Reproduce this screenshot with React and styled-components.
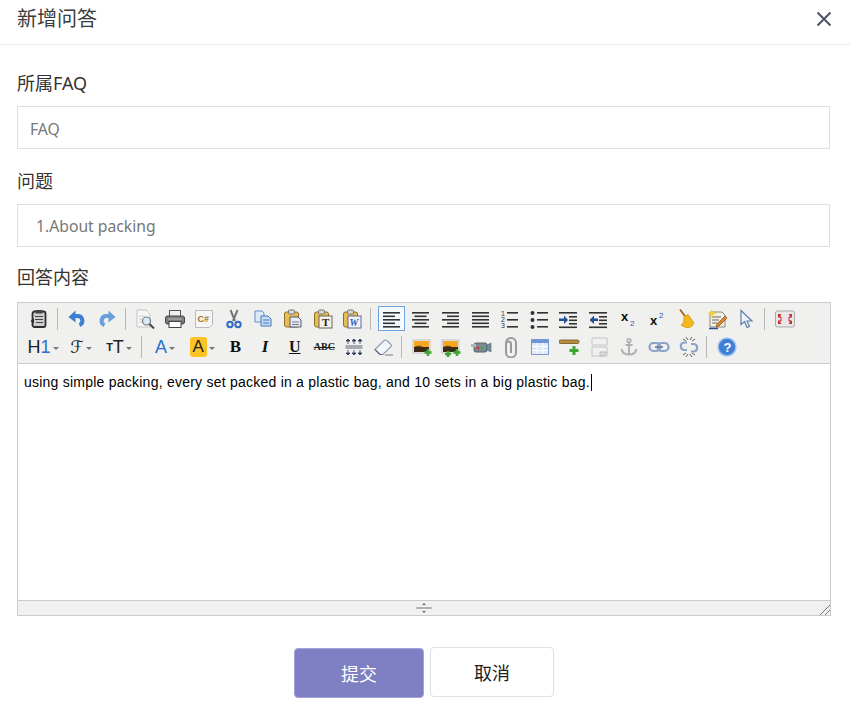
import React from 'react'
import styled, { createGlobalStyle } from 'styled-components'

const cjk = `"Noto Sans", "Noto Sans CJK SC", sans-serif`

const GlobalStyle = createGlobalStyle`
  html, body {
    margin: 0;
    background: #fff;
    font-family: ${cjk};
    color: #333;
  }
`

const Dialog = styled.div`
  width: 850px;
  height: 720px;
  overflow: hidden;
  background: #fff;
`

const Header = styled.header`
  height: 38px;
  display: flex;
  align-items: center;
  justify-content: space-between;
  padding: 0 17px 6px 17px;
  border-bottom: 1px solid #e9ebef;
`

const Title = styled.h1`
  margin: 0;
  font-size: 20px;
  line-height: 28px;
  font-weight: 400;
  color: #3b3b3b;
`

const CloseButton = styled.button`
  width: 18px;
  height: 18px;
  padding: 0;
  border: 0;
  background: none;
  display: flex;
`

const Form = styled.form`
  padding: 26px 19px 0 17px;
`

const Label = styled.label`
  display: block;
  font-size: 18px;
  line-height: 24px;
  color: #333;
  margin-bottom: ${p => p.$gap || 11}px;
`

const Input = styled.input`
  display: block;
  width: 813px;
  height: 43px;
  box-sizing: border-box;
  border: 1px solid #dcdfe6;
  padding: ${p => p.$inset};
  margin-bottom: ${p => p.$after}px;
  font: 15.700px ${cjk};
  color: #777;
  outline: none;
  &::placeholder { color: #777; opacity: 1; }
`

const Editor = styled.div`
  width: 814px;
  height: 314px;
  box-sizing: border-box;
  border: 1px solid #ccc;
  display: flex;
  flex-direction: column;
`

const Toolbar = styled.div`
  height: 61px;
  padding: 2px 0 0 6px;
  box-sizing: border-box;
  background: #f0f0ee;
  border-bottom: 1px solid #ccc;
`

const ToolRow = styled.div`
  height: 28px;
  display: flex;
  align-items: center;
`

const ToolButton = styled.div`
  flex: none;
  width: ${p => p.$w || 29.65}px;
  height: 28px;
  display: flex;
  align-items: center;
  justify-content: center;
  position: relative;
  color: #222;
  ${p => p.$active && `
    &::before {
      content: '';
      position: absolute;
      left: 2px;
      right: 0;
      top: 1px;
      bottom: 2px;
      border: 1px solid #6aa5e0;
      background: #f7fafd;
    }
  `}
  svg { position: relative; display: block; }
`

const Separator = styled.span`
  flex: none;
  width: ${p => p.$w || 8.6}px;
  height: 22px;
  position: relative;
  &::after {
    content: '';
    position: absolute;
    left: 3px;
    top: 0;
    bottom: 0;
    width: 1px;
    background: #b8b8b6;
  }
`

const DropArrow = styled.i`
  width: 0;
  height: 0;
  margin-left: 2px;
  margin-top: 2px;
  border: 3px solid transparent;
  border-top: 3px solid #777;
  border-bottom: 0;
`

const Glyph = styled.span`
  font-family: ${p => (p.$script ? '"DejaVu Sans", serif' : p.$serif ? '"Liberation Serif", serif' : '"Liberation Sans", sans-serif')};
  font-size: ${p => p.$size || 17}px;
  font-weight: ${p => (p.$bold ? 700 : 400)};
  font-style: ${p => (p.$italic ? 'italic' : 'normal')};
  line-height: 18px;
  color: ${p => p.$color || '#222'};
  text-decoration: ${p => p.$deco || 'none'};
`

const Marker = styled.span`
  width: 17px;
  height: 20px;
  border-radius: 3px;
  background: #fdc223;
  display: flex;
  align-items: center;
  justify-content: center;
`

const Body = styled.div`
  flex: 1;
  padding: 8px 6px;
  background: #fff;
  font: 14px/20px "Liberation Sans", Arial, sans-serif;
  letter-spacing: 0.235px;
  color: #000;
`

const Caret = styled.span`
  display: inline-block;
  width: 1px;
  height: 17px;
  margin-left: 1px;
  vertical-align: -4px;
  background: #000;
`

const StatusBar = styled.div`
  height: 14px;
  background: #f0f0ee;
  border-top: 1px solid #ccc;
  display: flex;
  align-items: center;
  justify-content: center;
  position: relative;
`

const ResizeCorner = styled.svg`
  position: absolute;
  right: 0;
  bottom: 0;
`

const Actions = styled.div`
  display: flex;
  justify-content: center;
  align-items: flex-start;
  gap: 6px;
  margin-top: 31px;
`

const Button = styled.button`
  width: ${p => (p.$primary ? 130 : 124)}px;
  height: 50px;
  box-sizing: border-box;
  margin-top: ${p => (p.$primary ? 1 : 0)}px;
  border: 1px solid ${p => (p.$primary ? '#a3a3dc' : '#dcdfe6')};
  border-radius: 4px;
  background: ${p => (p.$primary ? '#7f7fc4' : '#fff')};
  color: ${p => (p.$primary ? '#fff' : '#222')};
  font: 18px ${cjk};
`

const Ico = ({ children, w = 22, h = 22 }) => (
  <svg width={w} height={h} viewBox={`0 0 ${w} ${h}`} fill="none">{children}</svg>
)

const lines = (rows, color = '#333', h = 1.6) =>
  rows.map(([x, y, w], i) => <rect key={i} x={x} y={y} width={w} height={h} fill={color} />)

const Clipboard = ({ children }) => (
  <Ico>
    <rect x="2.500" y="4" width="14" height="15" rx="2" fill="#e9bd52" stroke="#8c6d2a" />
    <rect x="6.500" y="2" width="6" height="4" rx="1" fill="#d9d9d9" stroke="#777" />
    {children}
  </Ico>
)

const Pointer = ({ flip }) => (
  <g transform={flip ? 'translate(22 0) scale(-1 1)' : undefined}>
    <path d="M8 8h3.500a4.800 4.800 0 0 1 2 9.200" stroke={flip ? '#6a9fdc' : '#3f7fcf'} strokeWidth="4" />
    <path d="M2.500 9 9.500 2.500v12z" fill={flip ? '#6a9fdc' : '#3f7fcf'} />
  </g>
)

const Picture = ({ plus = 1 }) => (
  <Ico>
    <rect x="2" y="4" width="17" height="13" fill="#fff" stroke="#bbb" />
    <rect x="3" y="5" width="15" height="6" fill="#f5a623" />
    <path d="M3 11h15v5H3z" fill="#3a2a16" />
    <path d="M3 11q5-3 9 0z" fill="#7a4a12" />
    <path d="M17 13v7M13.500 16.500h7" stroke="#3fa535" strokeWidth="2.600" />
    {plus > 1 && <path d="M8 15v6M5 18h6" stroke="#3fa535" strokeWidth="2.600" />}
  </Ico>
)

const icons = {
  source: (
    <Ico>
      <rect x="4.500" y="3.500" width="13" height="15.500" rx="2" fill="#cfcfcf" stroke="#2e2e2e" strokeWidth="1.800" />
      <rect x="7.500" y="2" width="7" height="3.500" fill="#444" />
      <path d="M7 8.500h8M7 11.500h8M8 14.500h7" stroke="#444" />
      <path d="M2.500 13l3.500-2.500v5z" fill="#2e2e2e" />
    </Ico>
  ),
  undo: <Ico><Pointer /></Ico>,
  redo: <Ico><Pointer flip /></Ico>,
  preview: (
    <Ico>
      <path d="M3 2h9l4 4v13H3z" fill="#f7f7f7" stroke="#c4c4c4" />
      <path d="M5 8h6M5 11h3M5 14h3" stroke="#ccc" />
      <circle cx="12.500" cy="13" r="4" fill="#dcebf6" stroke="#778" strokeWidth="1.200" />
      <path d="M15.500 16l4.500 4.500" stroke="#444" strokeWidth="2" />
    </Ico>
  ),
  print: (
    <Ico>
      <rect x="5.500" y="2.500" width="11" height="6" fill="#eee" stroke="#555" />
      <rect x="1.500" y="8" width="19" height="8" rx="2" fill="#7d7d7d" stroke="#444" />
      <rect x="5" y="13.500" width="12" height="6" fill="#fff" stroke="#444" />
      <path d="M4 11h14" stroke="#bbb" />
    </Ico>
  ),
  csharp: (
    <Ico>
      <path d="M2.500 2.500h17v14l-3 3h-14z" fill="#f6f6f4" stroke="#bbb" />
      <text x="4.500" y="14" fontFamily="Liberation Sans" fontWeight="700" fontSize="9" fill="#a5722f">C#</text>
    </Ico>
  ),
  cut: (
    <Ico>
      <path d="M7.500 2l4.500 11M14.500 2 10 13" stroke="#777" strokeWidth="2" />
      <circle cx="7" cy="16.500" r="2.700" stroke="#2f6cc4" strokeWidth="2" />
      <circle cx="15" cy="16.500" r="2.700" stroke="#2f6cc4" strokeWidth="2" />
    </Ico>
  ),
  copy: (
    <Ico>
      <path d="M3 3h7l2 2v9H3z" fill="#dfeaf8" stroke="#5f8fcf" />
      <path d="M9 8h7l3 3v7H9z" fill="#c7dcf5" stroke="#3f74bd" />
      <path d="M11 12h6M11 15h6" stroke="#3f74bd" />
    </Ico>
  ),
  paste: <Clipboard><path d="M8 9h8l3 3v7H8z" fill="#e6ecf5" stroke="#556" /><path d="M10 14h7M10 16.500h7" stroke="#778" /></Clipboard>,
  pasteText: <Clipboard><rect x="7" y="8" width="13" height="12" fill="#f5f2e8" stroke="#666" /><text x="10" y="18" fontFamily="Liberation Serif" fontWeight="700" fontSize="11" fill="#222">T</text></Clipboard>,
  pasteWord: <Clipboard><rect x="7" y="8" width="13" height="12" fill="#f2f5fb" stroke="#668" /><text x="8.500" y="18" fontFamily="Liberation Serif" fontWeight="700" fontStyle="italic" fontSize="10" fill="#2a5db8">W</text></Clipboard>,
  left: <Ico>{lines([[3, 4, 17], [3, 7.500, 12], [3, 11, 17], [3, 14.500, 12], [3, 18, 17]])}</Ico>,
  center: <Ico>{lines([[3, 4, 17], [5.500, 7.500, 12], [3, 11, 17], [5.500, 14.500, 12], [3, 18, 17]])}</Ico>,
  right: <Ico>{lines([[3, 4, 17], [8, 7.500, 12], [3, 11, 17], [8, 14.500, 12], [3, 18, 17]])}</Ico>,
  justify: <Ico>{lines([[3, 4, 17], [3, 7.500, 17], [3, 11, 17], [3, 14.500, 17], [3, 18, 17]])}</Ico>,
  ol: (
    <Ico>
      {lines([[9, 4, 11], [9, 11, 11], [9, 18, 11]])}
      <text x="3" y="8" fontFamily="Liberation Sans" fontSize="7" fill="#333">1</text>
      <text x="3" y="14" fontFamily="Liberation Sans" fontSize="7" fill="#333">2</text>
      <text x="3" y="20" fontFamily="Liberation Sans" fontSize="7" fill="#333">3</text>
    </Ico>
  ),
  ul: (
    <Ico>
      {lines([[9, 4, 11], [9, 11, 11], [9, 18, 11]])}
      <circle cx="4.500" cy="5" r="2" fill="#333" /><circle cx="4.500" cy="12" r="2" fill="#333" /><circle cx="4.500" cy="19" r="2" fill="#333" />
    </Ico>
  ),
  indent: (
    <Ico>
      {lines([[2, 4, 18], [12, 8, 8], [12, 11.500, 8], [12, 15, 8], [2, 18.500, 18]])}
      <path d="M2 10.500h5V7.500l4 4.500-4 4v-3H2z" fill="#1f4f95" />
    </Ico>
  ),
  outdent: (
    <Ico>
      {lines([[2, 4, 18], [12, 8, 8], [12, 11.500, 8], [12, 15, 8], [2, 18.500, 18]])}
      <path d="M11 10.500H7V7.500L2.500 12 7 16v-3h4z" fill="#1f4f95" />
    </Ico>
  ),
  sub: (
    <Ico>
      <text x="4" y="13" fontFamily="Liberation Sans" fontWeight="700" fontSize="13" fill="#111">x</text>
      <text x="13" y="18" fontFamily="Liberation Sans" fontSize="8" fill="#2a5db8">2</text>
    </Ico>
  ),
  sup: (
    <Ico>
      <text x="4" y="17" fontFamily="Liberation Sans" fontWeight="700" fontSize="13" fill="#111">x</text>
      <text x="13" y="10" fontFamily="Liberation Sans" fontSize="8" fill="#2a5db8">2</text>
    </Ico>
  ),
  broom: (
    <Ico>
      <path d="M4 1.500l6 8" stroke="#a8651a" strokeWidth="1.800" />
      <path d="M8 9l4-2.500 6 8.500q-1 3-4.500 4.500T5 17q3.500-1.500 3-8z" fill="#f3b81f" stroke="#e0a312" />
    </Ico>
  ),
  edit: (
    <Ico>
      <path d="M4 4h12l3 3v12H4z" fill="#f4f0e2" stroke="#888" />
      <path d="M6 9h9M6 12h7M6 15h5" stroke="#666" />
      <path d="M6 1l1.200 3.300L10.500 5.500 7.200 6.700 6 10 4.800 6.700 1.500 5.500l3.300-1.200z" fill="#f8d52a" />
      <path d="M10 19l1-3 8-8 2 2-8 8z" fill="#d98a2c" stroke="#8a5a1c" strokeWidth=".8" />
      <path d="M3 20.500h9" stroke="#2a4f95" strokeWidth="1.500" />
    </Ico>
  ),
  cursor: (
    <Ico>
      <path d="M6 2.500v14l3.500-3 2.500 6 2.500-1-2.500-5.500H17z" fill="#eef3fa" stroke="#5f7fae" strokeWidth="1.200" />
    </Ico>
  ),
  fullscreen: (
    <Ico>
      <rect x="1.500" y="3" width="19" height="16" rx="2" fill="#e8e6e6" stroke="#aaa" />
      <path d="M4 6h3v1L6 8l2 2-1 1-2-2-1 1zM18 6h-3v1l1 1-2 2 1 1 2-2 1 1zM4 16h3v-1l-1-1 2-2-1-1-2 2-1-1zM18 16h-3v-1l1-1-2-2 1-1 2 2 1-1z" fill="#c9302c" />
    </Ico>
  ),
  spacing: (
    <Ico>
      <path d="M2.500 10h17M2.500 12h17" stroke="#5a6478" />
      {[5, 11, 17].map(x => (
        <path key={x} d="M0 4v4M0 14v4M-2 5 0 3l2 2zM-2 17l2 2 2-2z" transform={`translate(${x} 0)`} fill="#2f3a55" stroke="#2f3a55" strokeWidth=".8" />
      ))}
    </Ico>
  ),
  eraser: (
    <Ico>
      <path d="M2 13.500 11 4.500q2-1 4 1l3 3q1 2-1 3l-7 7H7z" fill="#f3f6fa" stroke="#8ba0b8" strokeWidth="1.200" />
      <path d="M2 13.500l5 5h3" stroke="#5f7086" strokeWidth="1.200" />
      <path d="M12 19h8" stroke="#777" />
    </Ico>
  ),
  image: <Picture />,
  images: <Picture plus={2} />,
  video: (
    <Ico>
      <rect x="4" y="7" width="13" height="9" rx="2" fill="#7b8b96" stroke="#566" />
      <path d="M1 8h5v3H1z" fill="#aab7c0" />
      <path d="M17 9l4-2v9l-4-2z" fill="#6f8ea5" stroke="#566" strokeWidth=".6" />
      <circle cx="8" cy="12" r="1.500" fill="#d33" />
      <circle cx="12" cy="12" r="1.500" fill="#4a4" />
    </Ico>
  ),
  clip: (
    <Ico>
      <path d="M6 7a5 5 0 0 1 10 0v9.500a5 5 0 0 1-10 0V8a2.500 2.500 0 0 1 5 0v9" stroke="#9a9a9a" strokeWidth="2" />
    </Ico>
  ),
  table: (
    <Ico>
      <rect x="2.500" y="3.500" width="17" height="15" fill="#dfe8f8" stroke="#7d9bd0" />
      <rect x="2.500" y="3.500" width="17" height="3.500" fill="#6f95d6" />
      <path d="M8 7v11M14 7v11M3 10.500h16M3 14.500h16" stroke="#fff" />
    </Ico>
  ),
  hr: (
    <Ico>
      <rect x="0" y="4" width="20" height="3.500" rx="1.500" fill="#b88d3c" stroke="#6e5222" strokeWidth=".8" />
      <path d="M15 10v9M10.500 14.500h9" stroke="#3fa535" strokeWidth="3" />
    </Ico>
  ),
  pagebreak: (
    <Ico>
      <path d="M3 2h15v7H3zM3 11h15v9H3z" fill="#f0f0f0" stroke="#c4c4c4" />
      <path d="M11 16h7l-3 4h-4z" fill="#ddd" stroke="#bbb" />
    </Ico>
  ),
  anchor: (
    <Ico>
      <circle cx="11" cy="4.500" r="1.800" stroke="#b0b0b0" strokeWidth="1.600" />
      <path d="M11 6.500v12M7.500 9h7M3.500 13q1 5.500 7.500 5.500T18.500 13" stroke="#b0b0b0" strokeWidth="2" />
    </Ico>
  ),
  link: (
    <Ico>
      <rect x="1.500" y="7" width="11" height="8" rx="4" stroke="#8ba3c6" strokeWidth="2.200" />
      <rect x="9.500" y="7" width="11" height="8" rx="4" stroke="#8ba3c6" strokeWidth="2.200" />
      <path d="M7 11h8" stroke="#667a9c" strokeWidth="1.500" />
    </Ico>
  ),
  unlink: (
    <Ico>
      <path d="M9 6.500H6a3.800 3.800 0 0 0 0 7.500h3M13 8h3a3.800 3.800 0 0 1 0 7.500h-3" stroke="#8ba3c6" strokeWidth="2.200" />
      <path d="M8 1l2 3M14 1l-2 3M5 3l3 2M17 3l-3 2M8 21l2-3M14 21l-2-3M5 19l3-2M17 19l-3-2" stroke="#666" />
    </Ico>
  ),
  help: (
    <Ico>
      <circle cx="11" cy="11" r="9" fill="#3f7fd8" stroke="#a9c8f0" strokeWidth="1.500" />
      <text x="7.500" y="16" fontFamily="Liberation Sans" fontWeight="700" fontSize="13" fill="#fff">?</text>
    </Ico>
  ),
}

const firstRow = ['source', '|', 'undo', 'redo', '|', 'preview', 'print', 'csharp', 'cut', 'copy', 'paste', 'pasteText', 'pasteWord', '|', 'left', 'center', 'right', 'justify', 'ol', 'ul', 'indent', 'outdent', 'sub', 'sup', 'broom', 'edit', 'cursor', '|', 'fullscreen']
const secondRow = ['|', 'image', 'images', 'video', 'clip', 'table', 'hr', 'pagebreak', 'anchor', 'link', 'unlink', '|', 'help']

const Tool = ({ name }) =>
  name === '|' ? <Separator /> : <ToolButton $active={name === 'left'}>{icons[name]}</ToolButton>

const App = () => (
  <Dialog>
    <GlobalStyle />
    <Header>
      <Title>新增问答</Title>
      <CloseButton type="button" aria-label="关闭">
        <svg width="18" height="18" viewBox="0 0 18 18" fill="none">
          <path d="M2.500 2.500l13 13M15.500 2.500l-13 13" stroke="#4d5466" strokeWidth="2" />
        </svg>
      </CloseButton>
    </Header>
    <Form>
      <Label>所属FAQ</Label>
      <Input placeholder="FAQ" readOnly $after={20} $inset="2px 12px 0" />
      <Label>问题</Label>
      <Input value=" 1.About packing" readOnly $after={18} $inset="0 12px 0 14px" />
      <Label $gap={13}>回答内容</Label>
      <Editor>
        <Toolbar>
          <ToolRow>
            {firstRow.map((name, i) => <Tool key={i} name={name} />)}
          </ToolRow>
          <ToolRow>
            <ToolButton $w={38}>
              <Glyph $size={18}>H<Glyph $size={18} $color="#2a6fd0">1</Glyph></Glyph><DropArrow />
            </ToolButton>
            <ToolButton $w={38}>
              <Glyph $script $size={17}>ℱ</Glyph><DropArrow />
            </ToolButton>
            <ToolButton $w={38}>
              <Glyph $size={11} $bold>T</Glyph><Glyph $size={18}>T</Glyph><DropArrow />
            </ToolButton>
            <Separator />
            <ToolButton $w={37}>
              <Glyph $size={18} $color="#2a6fd0">A</Glyph><DropArrow />
            </ToolButton>
            <ToolButton $w={37}>
              <Marker><Glyph $size={17}>A</Glyph></Marker><DropArrow />
            </ToolButton>
            <ToolButton><Glyph $serif $bold $size={17} $color="#111">B</Glyph></ToolButton>
            <ToolButton><Glyph $serif $bold $italic $size={17} $color="#111">I</Glyph></ToolButton>
            <ToolButton><Glyph $serif $bold $size={16} $color="#111" $deco="underline">U</Glyph></ToolButton>
            <ToolButton><Glyph $serif $bold $size={10} $color="#222" $deco="line-through">ABC</Glyph></ToolButton>
            <ToolButton>{icons.spacing}</ToolButton>
            <ToolButton>{icons.eraser}</ToolButton>
            {secondRow.map((name, i) => <Tool key={i} name={name} />)}
          </ToolRow>
        </Toolbar>
        <Body>
          using simple packing, every set packed in a plastic bag, and 10 sets in a big plastic bag.<Caret />
        </Body>
        <StatusBar>
          <svg width="18" height="12" viewBox="0 0 18 12" fill="none">
            <path d="M1 6h16" stroke="#b5b5b5" strokeWidth="2" />
            <path d="M9 1l2 2H7zM9 11l2-2H7z" fill="#666" />
          </svg>
          <ResizeCorner width="12" height="12" viewBox="0 0 12 12" fill="none">
            <path d="M2 12 12 2M7 12l5-5" stroke="#777" />
          </ResizeCorner>
        </StatusBar>
      </Editor>
      <Actions>
        <Button type="button" $primary>提交</Button>
        <Button type="button">取消</Button>
      </Actions>
    </Form>
  </Dialog>
)

export default App
